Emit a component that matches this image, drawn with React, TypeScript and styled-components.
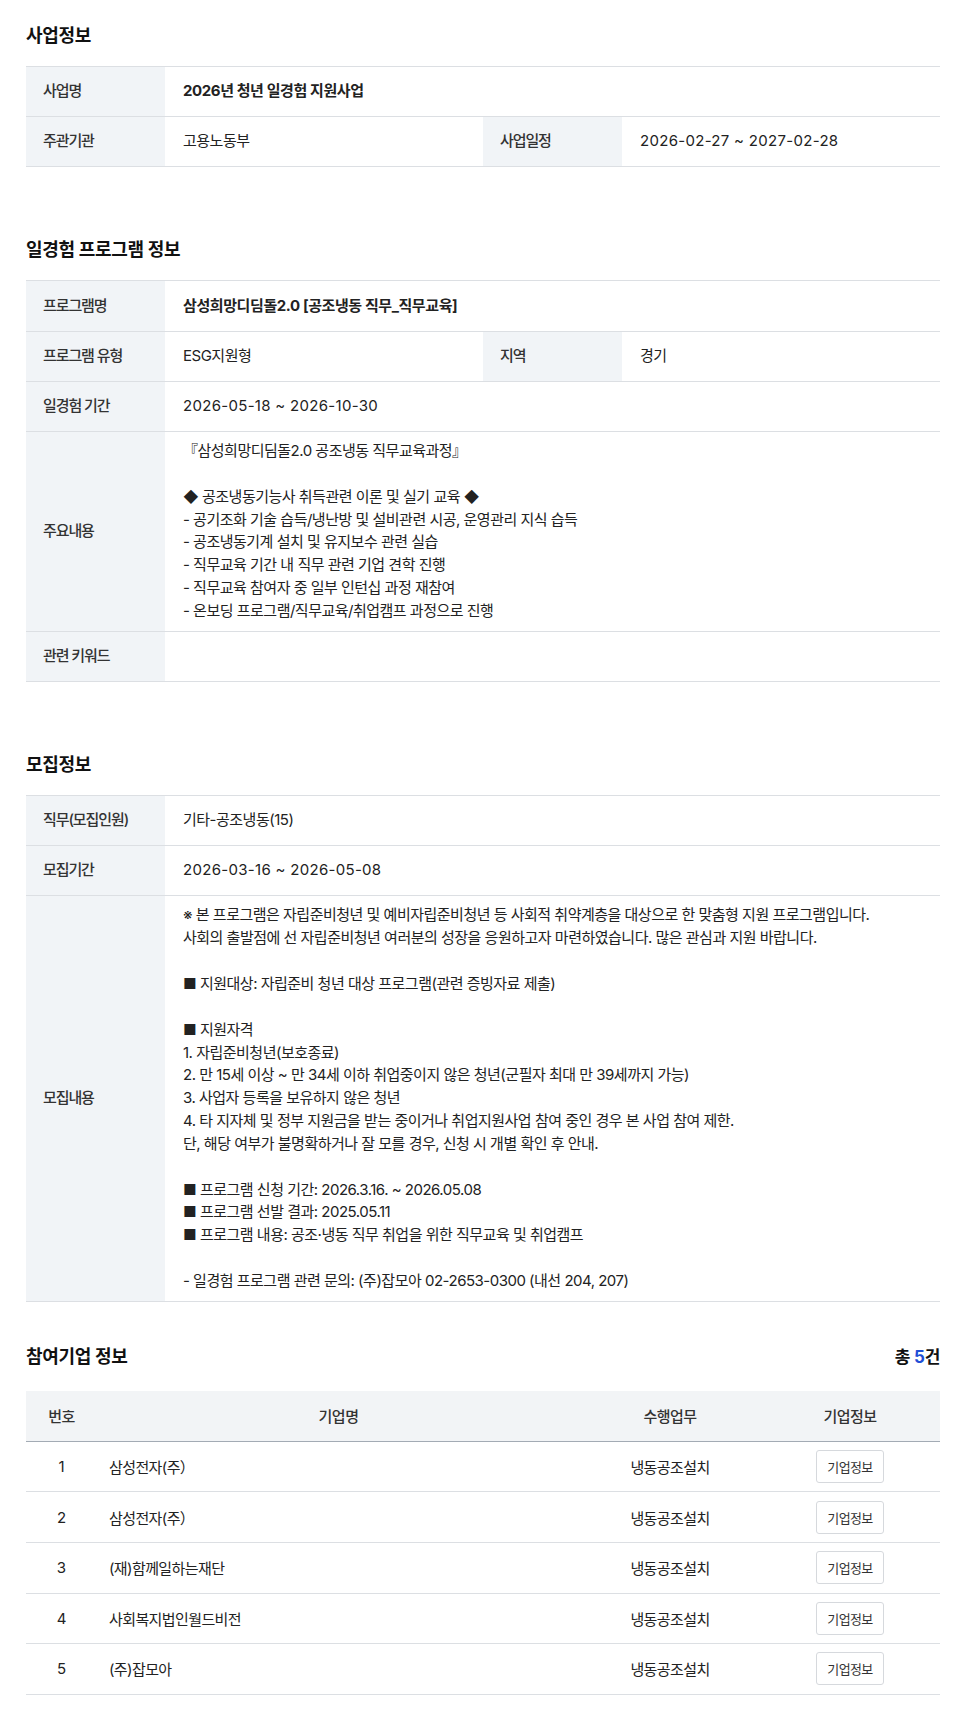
import React from "react";
import styled, { createGlobalStyle } from "styled-components";

const GlobalStyle = createGlobalStyle`
  * { box-sizing: border-box; }
  html, body { margin: 0; padding: 0; background: #ffffff; }
  body {
    font-family: Inter, "Noto Sans CJK KR", "Noto Sans", sans-serif;
    color: #222222;
    -webkit-font-smoothing: antialiased;
  }
`;

const Page = styled.main`
  padding: 23px 14px 16px 26px;
  font-size: 15px;
  letter-spacing: -0.5px;
`;

const Section = styled.section<{ $gap: number }>`
  margin-bottom: ${(p) => p.$gap}px;
`;

const SectionHeader = styled.div<{ $gap: number }>`
  display: flex;
  align-items: center;
  justify-content: space-between;
  margin-bottom: ${(p) => p.$gap}px;
`;

const Title = styled.h2`
  margin: 0;
  font-size: 18px;
  line-height: 26px;
  font-weight: 700;
  color: #111111;
  letter-spacing: -0.3px;
`;

const Counter = styled.div`
  font-size: 17px;
  line-height: 26px;
  font-weight: 700;
  color: #111111;
  letter-spacing: -0.4px;
`;

const CountNum = styled.span`
  color: #1f4fd6;
  letter-spacing: 0;
  margin-left: 4px;
`;

const InfoTable = styled.div`
  display: grid;
  grid-template-columns: 139px 1fr 139px 1fr;
  border-top: 1px solid #dcdfe3;
`;

const Label = styled.div`
  display: flex;
  align-items: center;
  padding: 0 17px;
  background: #f1f4f7;
  border-bottom: 1px solid #dcdfe3;
  color: #333333;
  font-size: 15px;
  font-weight: 500;
  letter-spacing: -1.1px;
  line-height: 22.85px;
`;

const Value = styled.div<{
  $span?: number;
  $strong?: boolean;
  $multi?: boolean;
  $plain?: boolean;
}>`
  grid-column: span ${(p) => p.$span ?? 1};
  min-height: 50.2px;
  padding: ${(p) => (p.$multi ? "8px 18px" : "13.2px 18px")};
  border-bottom: 1px solid #dcdfe3;
  line-height: 22.85px;
  white-space: pre-line;
  font-weight: ${(p) => (p.$strong ? 700 : 400)};
  letter-spacing: ${(p) => (p.$plain ? "0.3px" : p.$strong ? "-0.4px" : "-0.5px")};
  color: #222222;
`;

const CompanyTable = styled.div`
  display: grid;
  grid-template-columns: 71px 1fr 180px 180px;
`;

const HeadCell = styled.div`
  display: flex;
  align-items: center;
  justify-content: center;
  height: 51px;
  background: #f2f4f6;
  border-bottom: 1px solid #a3abb4;
  color: #333333;
  font-weight: 500;
`;

const Cell = styled.div<{ $align?: "left" | "center"; $plain?: boolean }>`
  display: flex;
  align-items: center;
  justify-content: ${(p) => (p.$align === "left" ? "flex-start" : "center")};
  height: 50.6px;
  padding: 0 12px;
  border-bottom: 1px solid #dcdfe3;
  color: #222222;
  letter-spacing: ${(p) => (p.$plain ? "0" : "-0.6px")};
`;

const InfoButton = styled.button`
  height: 33px;
  padding: 0 10px;
  border: 1px solid #d6d9dd;
  border-radius: 3px;
  background: #ffffff;
  color: #333333;
  font-family: inherit;
  font-size: 13px;
  letter-spacing: -0.6px;
  cursor: pointer;
`;

const mainContent = `『삼성희망디딤돌2.0 공조냉동 직무교육과정』

◆ 공조냉동기능사 취득관련 이론 및 실기 교육 ◆
- 공기조화 기술 습득/냉난방 및 설비관련 시공, 운영관리 지식 습득
- 공조냉동기계 설치 및 유지보수 관련 실습
- 직무교육 기간 내 직무 관련 기업 견학 진행
- 직무교육 참여자 중 일부 인턴십 과정 재참여
- 온보딩 프로그램/직무교육/취업캠프 과정으로 진행`;

const recruitContent = `※ 본 프로그램은 자립준비청년 및 예비자립준비청년 등 사회적 취약계층을 대상으로 한 맞춤형 지원 프로그램입니다.
사회의 출발점에 선 자립준비청년 여러분의 성장을 응원하고자 마련하였습니다. 많은 관심과 지원 바랍니다.

■ 지원대상: 자립준비 청년 대상 프로그램(관련 증빙자료 제출)

■ 지원자격
1. 자립준비청년(보호종료)
2. 만 15세 이상 ~ 만 34세 이하 취업중이지 않은 청년(군필자 최대 만 39세까지 가능)
3. 사업자 등록을 보유하지 않은 청년
4. 타 지자체 및 정부 지원금을 받는 중이거나 취업지원사업 참여 중인 경우 본 사업 참여 제한.
단, 해당 여부가 불명확하거나 잘 모를 경우, 신청 시 개별 확인 후 안내.

■ 프로그램 신청 기간: 2026.3.16. ~ 2026.05.08
■ 프로그램 선발 결과: 2025.05.11
■ 프로그램 내용: 공조·냉동 직무 취업을 위한 직무교육 및 취업캠프

- 일경험 프로그램 관련 문의: (주)잡모아 02-2653-0300 (내선 204, 207)`;

const companies = [
  { no: 1, name: "삼성전자(주）", task: "냉동공조설치" },
  { no: 2, name: "삼성전자(주）", task: "냉동공조설치" },
  { no: 3, name: "(재)함께일하는재단", task: "냉동공조설치" },
  { no: 4, name: "사회복지법인월드비전", task: "냉동공조설치" },
  { no: 5, name: "(주)잡모아", task: "냉동공조설치" },
];

export default function App() {
  return (
    <>
      <GlobalStyle />
      <Page>
        <Section $gap={70}>
          <SectionHeader $gap={17}>
            <Title>사업정보</Title>
          </SectionHeader>
          <InfoTable>
            <Label>사업명</Label>
            <Value $span={3} $strong>
              2026년 청년 일경험 지원사업
            </Value>
            <Label>주관기관</Label>
            <Value>고용노동부</Value>
            <Label>사업일정</Label>
            <Value $plain>2026-02-27 ~ 2027-02-28</Value>
          </InfoTable>
        </Section>

        <Section $gap={70}>
          <SectionHeader $gap={17}>
            <Title>일경험 프로그램 정보</Title>
          </SectionHeader>
          <InfoTable>
            <Label>프로그램명</Label>
            <Value $span={3} $strong>
              삼성희망디딤돌2.0 [공조냉동 직무_직무교육]
            </Value>
            <Label>프로그램 유형</Label>
            <Value>ESG지원형</Value>
            <Label>지역</Label>
            <Value>경기</Value>
            <Label>일경험 기간</Label>
            <Value $span={3} $plain>
              2026-05-18 ~ 2026-10-30
            </Value>
            <Label>주요내용</Label>
            <Value $span={3} $multi>
              {mainContent}
            </Value>
            <Label>관련 키워드</Label>
            <Value $span={3} />
          </InfoTable>
        </Section>

        <Section $gap={42}>
          <SectionHeader $gap={17}>
            <Title>모집정보</Title>
          </SectionHeader>
          <InfoTable>
            <Label>직무(모집인원)</Label>
            <Value $span={3}>기타-공조냉동(15)</Value>
            <Label>모집기간</Label>
            <Value $span={3} $plain>
              2026-03-16 ~ 2026-05-08
            </Value>
            <Label>모집내용</Label>
            <Value $span={3} $multi>
              {recruitContent}
            </Value>
          </InfoTable>
        </Section>

        <Section $gap={0}>
          <SectionHeader $gap={21}>
            <Title>참여기업 정보</Title>
            <Counter>
              총<CountNum>5</CountNum>건
            </Counter>
          </SectionHeader>
          <CompanyTable>
            <HeadCell>번호</HeadCell>
            <HeadCell>기업명</HeadCell>
            <HeadCell>수행업무</HeadCell>
            <HeadCell>기업정보</HeadCell>
            {companies.map((c) => (
              <React.Fragment key={c.no}>
                <Cell $plain>{c.no}</Cell>
                <Cell $align="left">{c.name}</Cell>
                <Cell>{c.task}</Cell>
                <Cell>
                  <InfoButton type="button">기업정보</InfoButton>
                </Cell>
              </React.Fragment>
            ))}
          </CompanyTable>
        </Section>
      </Page>
    </>
  );
}
